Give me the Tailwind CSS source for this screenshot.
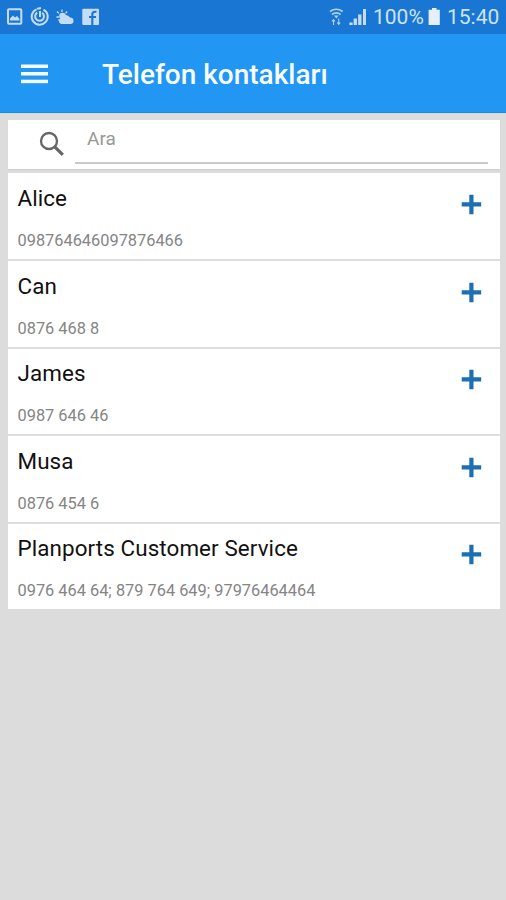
<!DOCTYPE html>
<html lang="tr">
<head>
<meta charset="utf-8">
<title>Telefon kontakları</title>
<script src="https://cdn.jsdelivr.net/npm/@tailwindcss/browser@4"></script>
</head>
<body class="bg-[#dcdcdc] font-['Roboto',sans-serif]">
<div class="w-[506px] h-[900px] overflow-hidden flex flex-col">
  <div class="h-[34px] shrink-0 bg-[#1976d2] flex items-center text-[#cfe3f9]">
    <svg class="w-[110px] h-[34px] shrink-0" viewBox="0 0 110 34" fill="none" stroke="#c5dcf5">
      <rect x="8" y="9.2" width="13.3" height="14.6" rx="1" stroke-width="2"/>
      <path d="M10 20.500v-2l3-3 2 2 2-1.500 2.500 3v1.500z" fill="#c5dcf5" stroke="none"/>
      <path d="M36.500 9.300a8 8 0 1 0 7 .300" stroke-width="2"/>
      <path d="M37 8.800a8 8 0 0 1 4-.600" stroke-width="2"/>
      <path d="M37.200 12.700a4.400 4.400 0 1 0 5 .200M40 11v6" stroke-width="2"/>
      <path d="M62 9.500v2.500M57 11.500l1.800 1.800M56.500 17h2.500M67 11.500l-1.500 1.800M58.500 20.500l1-1" stroke-width="1.300"/>
      <circle cx="62.500" cy="16" r="3.300" fill="#c5dcf5" stroke="none"/>
      <path d="M61 24a3.200 3.200 0 0 1 0-6 5 5 0 0 1 9-.500 3.300 3.300 0 0 1 1 6.500z" fill="#c5dcf5" stroke="none"/>
      <rect x="82.300" y="8.700" width="16.700" height="16.300" rx="1" fill="#c5dcf5" stroke="none"/>
      <path d="M92.300 25v-7M96.500 11.700h-1.500q-2.700 0-2.700 2.800v4M89 17h7" stroke="#1976d2" stroke-width="2.100"/>
    </svg>
    <svg class="w-[40px] h-[34px] shrink-0 ml-[219px]" viewBox="329 0 40 34" fill="none" stroke="#b5d1f1">
      <path d="M330 11.500q6.300-4.500 12.600 0M332 14.500q4.300-3.200 8.600 0" stroke-width="1.600"/>
      <path d="M334 15.500h4.600l-2.300 3z" fill="#b5d1f1" stroke="none"/>
      <path d="M333.500 25v-5M332 21.500l1.500-1.800 1.500 1.800M338.700 18.500v5.500M337.200 22.500l1.500 1.800 1.500-1.800" stroke-width="1.100"/>
      <path d="M351 25v-2.500M355.300 25v-6.500M359.800 25v-10.500" stroke="#c5dcf5" stroke-width="3.300"/>
      <path d="M364.500 25V9" stroke="#c5dcf5" stroke-width="3"/>
    </svg>
    <span class="ml-[4px] w-[52px] text-[21px] leading-[34px] whitespace-nowrap">100%</span>
    <svg class="w-[13px] h-[34px] shrink-0 ml-[3px]" viewBox="428 0 13 34" fill="#e5f0fc"><path d="M432 8h4.500v1.700h3.300V25h-11.200V9.700H432z"/></svg>
    <span class="ml-[6px] text-[21px] leading-[34px] whitespace-nowrap">15:40</span>
  </div>
  <div class="h-[79px] shrink-0 bg-[#2196f3] border-b border-[#118bf0] flex items-center">
    <svg class="w-[27px] h-[20px] ml-[21px] mt-[1px] shrink-0" viewBox="0 0 27 20" fill="#f5fbff"><rect y="0.500" width="27" height="3.500"/><rect y="8" width="27" height="3.500"/><rect y="15.700" width="27" height="3.500"/></svg>
    <h1 class="ml-[54px] mt-[4px] text-[28px] leading-[32px] font-medium text-[#f8fcff] whitespace-nowrap">Telefon kontakları</h1>
  </div>
  <div class="h-[49px] shrink-0 mt-[7px] ml-[8px] w-[492px] bg-white flex shadow-[0_1px_1px_#cfcfcf]">
    <svg class="w-[26px] h-[26px] ml-[31px] mt-[11px] shrink-0" viewBox="0 0 26 26" fill="none" stroke="#666"><circle cx="10" cy="10" r="8" stroke-width="2.300"/><path d="M15.800 15.800l8 8" stroke-width="3.200"/></svg>
    <div class="ml-[10px] w-[413px] h-[44px] border-b-2 border-[#cacaca] pl-[12px] pt-[5px] text-[19px] leading-[27px] text-[#999]">Ara</div>
  </div>
  <div class="mt-[4px] ml-[8px] w-[492px] h-[436px] shrink-0 bg-white flex flex-col">
    <div class="h-[88px] border-b-2 border-[#dedede] flex justify-between pl-[9.500px] pr-[18px]">
      <div><div class="mt-[10px] text-[22.400px] leading-[30px] tracking-[0.1px] text-[#111]">Alice</div><div class="mt-[18px] text-[16.370px] leading-[20px] text-[#858585]">098764646097876466</div></div>
      <svg class="w-[21px] h-[21px] mt-[21px]" viewBox="0 0 21 21" fill="#1d6fb3"><path d="M8.300.800h4.200v7.500h7.700v4.200h-7.700v7.700H8.300v-7.700H.700V8.300h7.600z"/></svg>
    </div>
    <div class="h-[88px] border-b-2 border-[#dedede] flex justify-between pl-[9.500px] pr-[18px]">
      <div><div class="mt-[10px] text-[22.400px] leading-[30px] tracking-[0.1px] text-[#111]">Can</div><div class="mt-[18px] text-[16.370px] leading-[20px] text-[#858585]">0876 468 8</div></div>
      <svg class="w-[21px] h-[21px] mt-[21px]" viewBox="0 0 21 21" fill="#1d6fb3"><path d="M8.300.800h4.200v7.500h7.700v4.200h-7.700v7.700H8.300v-7.700H.700V8.300h7.600z"/></svg>
    </div>
    <div class="h-[87px] border-b-2 border-[#dedede] flex justify-between pl-[9.500px] pr-[18px]">
      <div><div class="mt-[9px] text-[22.400px] leading-[30px] tracking-[0.1px] text-[#111]">James</div><div class="mt-[18px] text-[16.370px] leading-[20px] text-[#858585]">0987 646 46</div></div>
      <svg class="w-[21px] h-[21px] mt-[20px]" viewBox="0 0 21 21" fill="#1d6fb3"><path d="M8.300.800h4.200v7.500h7.700v4.200h-7.700v7.700H8.300v-7.700H.700V8.300h7.600z"/></svg>
    </div>
    <div class="h-[88px] border-b-2 border-[#dedede] flex justify-between pl-[9.500px] pr-[18px]">
      <div><div class="mt-[10px] text-[22.400px] leading-[30px] tracking-[0.1px] text-[#111]">Musa</div><div class="mt-[18px] text-[16.370px] leading-[20px] text-[#858585]">0876 454 6</div></div>
      <svg class="w-[21px] h-[21px] mt-[21px]" viewBox="0 0 21 21" fill="#1d6fb3"><path d="M8.300.800h4.200v7.500h7.700v4.200h-7.700v7.700H8.300v-7.700H.700V8.300h7.600z"/></svg>
    </div>
    <div class="flex justify-between pl-[9.500px] pr-[18px]">
      <div><div class="mt-[9px] text-[22.400px] leading-[30px] tracking-[0.1px] text-[#111] whitespace-nowrap">Planports Customer Service</div><div class="mt-[18px] text-[16.370px] leading-[20px] text-[#858585] whitespace-nowrap">0976 464 64; 879 764 649; 97976464464</div></div>
      <svg class="w-[21px] h-[21px] mt-[20px]" viewBox="0 0 21 21" fill="#1d6fb3"><path d="M8.300.800h4.200v7.500h7.700v4.200h-7.700v7.700H8.300v-7.700H.700V8.300h7.600z"/></svg>
    </div>
  </div>
</div>
</body>
</html>
